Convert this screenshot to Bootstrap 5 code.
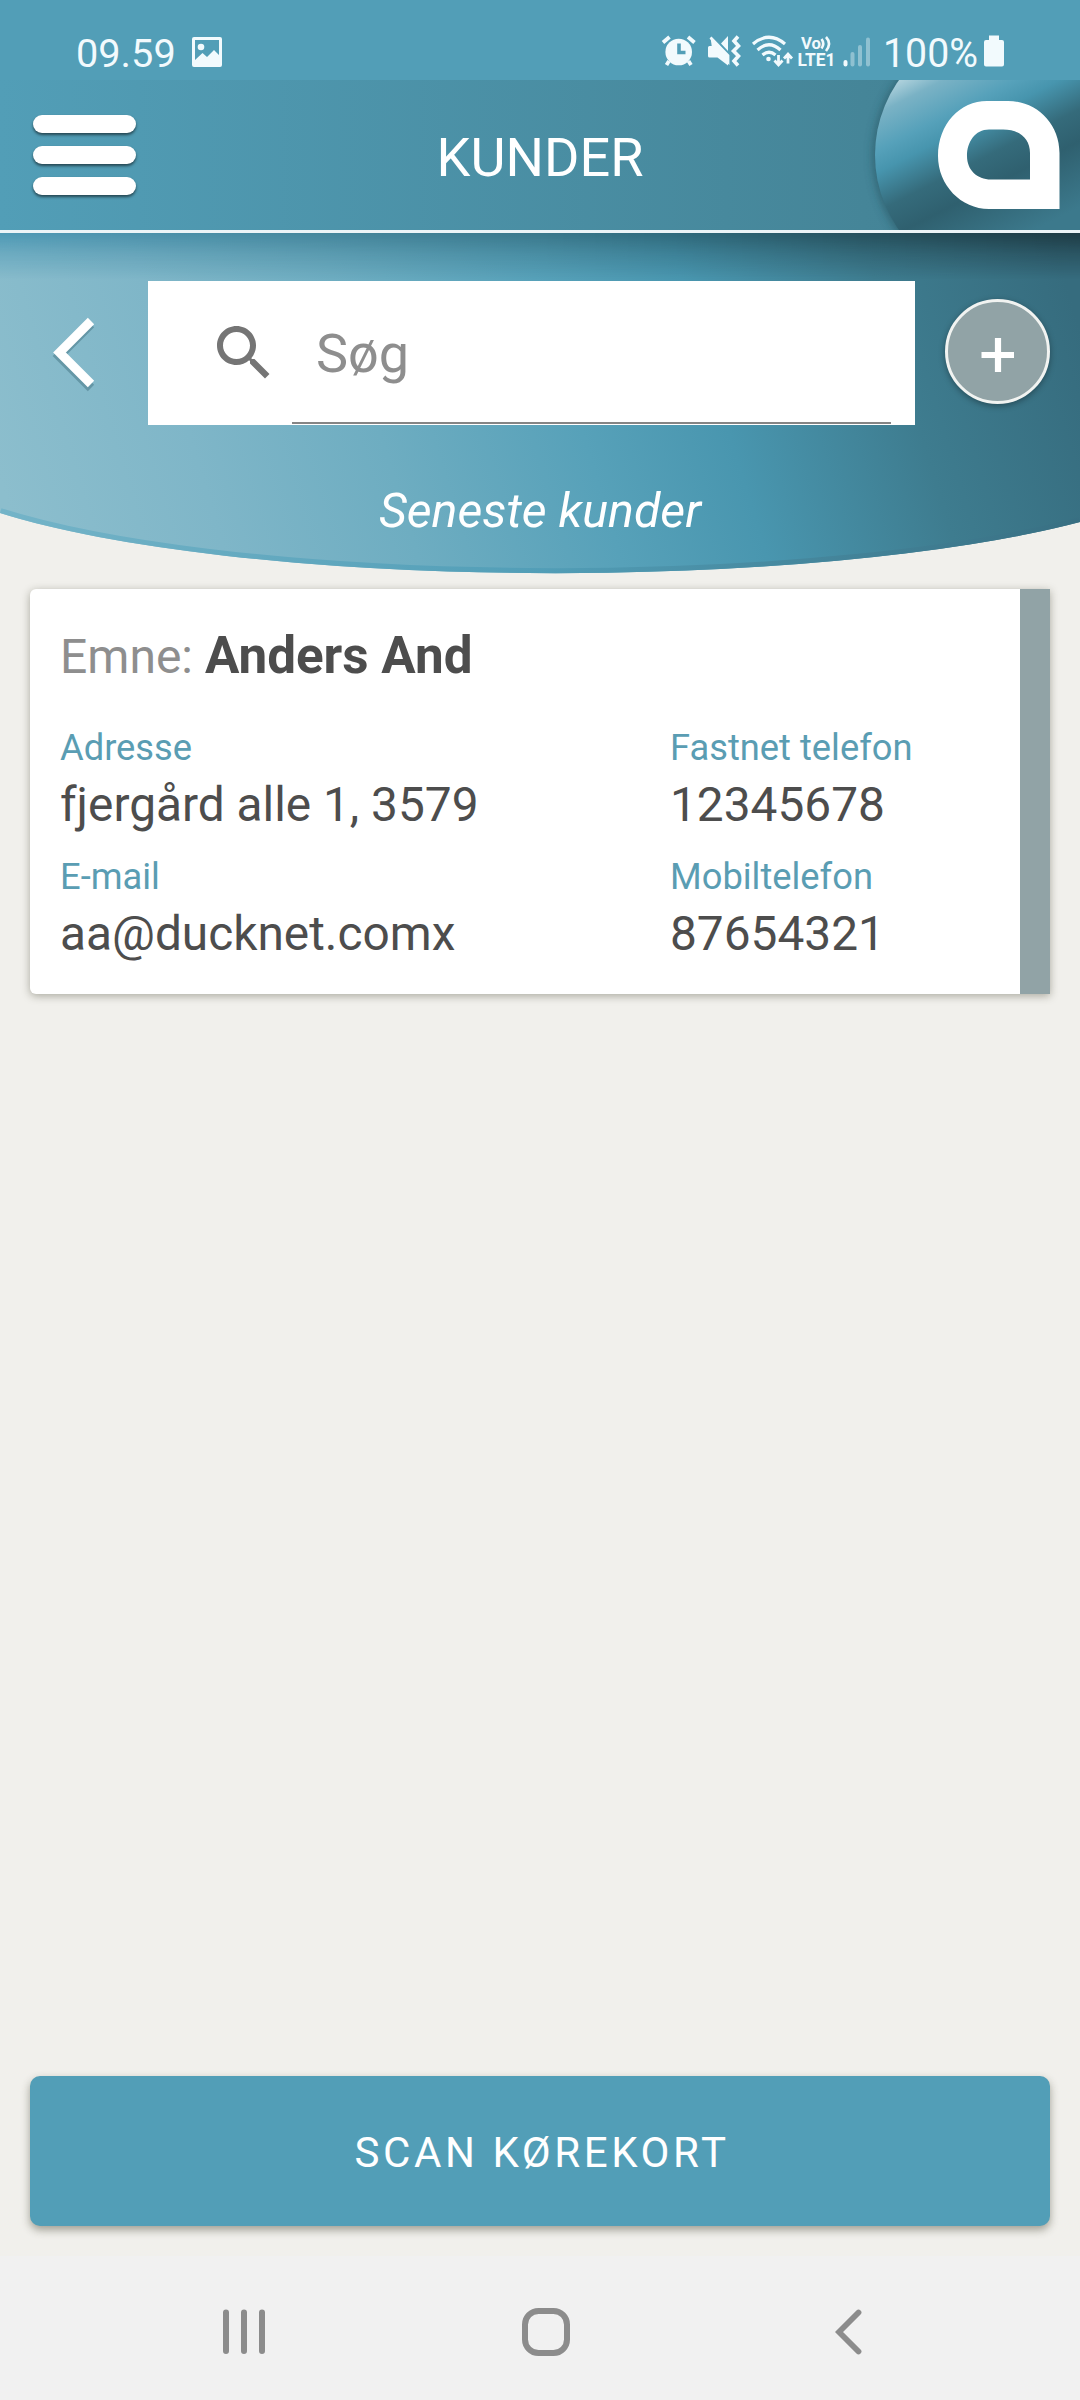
<!DOCTYPE html>
<html lang="da">
<head>
<meta charset="utf-8">
<meta name="viewport" content="width=device-width, initial-scale=1">
<title>Kunder</title>
<link href="https://cdn.jsdelivr.net/npm/bootstrap@5.3.0/dist/css/bootstrap.min.css" rel="stylesheet">
<style>
body{font-family:Roboto,"Liberation Sans",sans-serif;background:#f1f0ec;color:#4d4d4d}
.phone{width:1080px;height:2400px;overflow:hidden}
svg{display:block;flex:none}
.statusbar{height:80px;background:#529eb7;color:#f2fafd;font-size:39.7px;line-height:40px;padding:33px 74px 0 76px}
.clock{margin-top:1px}
.pic-icon{margin:4px 0 0 16px}
.appbar{height:153px;border-bottom:3px solid #ecf4f7;background:linear-gradient(90deg,#529eb7,#458598 80%,#417f91)}
.menu-btn{width:103px;gap:13px;margin:-1px 0 0 33px}
.menu-btn span{height:18px;border-radius:9px;background:#fff;box-shadow:0 2px 3px rgba(0,0,0,.55)}
.app-title{font-size:54px;line-height:60px;color:#fff;padding-top:5px}
.hero{height:343px}
.hero-art{position:absolute;left:0;top:0}
.search-row{padding:48px 30px 0 0;height:249px}
.back-btn{width:148px;height:144px}
.search-box{width:767px;height:144px;background:#fff;padding:0 24px 0 60px}
.search-field{width:599px;border:0;border-bottom:2px solid #858585;padding:3px 0 0 24px;height:143px;outline:0;font-size:54px;color:#4d4d4d;background:transparent}
.search-field::placeholder{color:#8e8e8e;opacity:1}
.add-btn{width:105px;height:105px;margin-top:18px;border:3px solid #f1f3f1;background:#91a3a6;box-shadow:0 2px 6px rgba(0,0,0,.35)}
.hero-label{font-size:48.3px;line-height:58px;color:#fff}
.customer{margin:13px 30px 0;height:405px;border-radius:6px 0 0 6px;border-right:30px solid #91a3a6;background:#fff;box-shadow:0 2px 9px rgba(60,60,40,.4);padding:38px 30px 0}
.subject{font-size:48px;line-height:60px;color:#8e8e8e;margin-bottom:35px}
.subject b{font-size:51.2px;line-height:50px;color:#4d4d4d}
.cap{font-size:36.3px;line-height:52px;color:#5a9db3}
.val{font-size:47.8px;line-height:62px;margin-bottom:15px}
.left-col{width:610px}
.scan{height:150px;border-radius:10px;background:#529eb7;color:#fff;font-size:42px;letter-spacing:3.6px;margin:0 30px 30px;padding:2px 0 0 4px;box-shadow:0 4px 8px rgba(60,60,40,.45)}
.navkeys{height:144px;background:#f1f1f1;padding:8px 0 0 12px}
.navkeys div{width:302px}
</style>
</head>
<body>
<div class="phone d-flex flex-column">
  <div class="statusbar d-flex">
    <span class="clock">09.59</span>
    <svg class="pic-icon" width="30" height="30" viewBox="0 0 30 30"><path fill="#f2fafd" fill-rule="evenodd" d="M2 0H28Q30 0 30 2V28Q30 30 28 30H2Q0 30 0 28V2Q0 0 2 0ZM3 3V23L10.500 16L15 20L22 13L27 18V3Z"/><circle cx="9" cy="10" r="3.300" fill="#f2fafd"/></svg>
    <svg class="ms-auto" width="346" height="46" viewBox="660 33 346 46" fill="#f2fafd" stroke="none">
      <circle cx="678.700" cy="52" r="13.300"/>
      <path d="M663 42.500L669.500 37M688 37L694.500 42.500M669 61L666.500 65M688.500 61L691 65" stroke="#f2fafd" stroke-width="3.800" fill="none"/>
      <path d="M679 43.500V52.500H685.500" stroke="#529eb7" stroke-width="3.600" fill="none"/>
      <path d="M709.500 46H712.500L728 60V65.500L717.500 57.500H709.500Q708 57.500 708 56V47.500Q708 46 709.500 46ZM728 36V51L721 43.500Z"/>
      <path d="M710.500 37.500L728 55.500V62L712 48" stroke="#f2fafd" stroke-width="2.800"/>
      <path d="M738 36.500L734 41L738.500 46L733.500 51L738.500 56L734 61L738 65.500" stroke="#f2fafd" stroke-width="3.600" fill="none"/>
      <g fill="none" stroke="#f2fafd" stroke-width="3.200"><path d="M753 44Q769 30.500 785 44"/><path d="M757.500 50Q769 39.500 780.500 50"/><path d="M762.500 55Q769 49.500 775.500 55"/><path d="M778.500 55V64M774.500 60.500L778.500 65L782.500 60.500M788 63.500V54M784 58.500L788 54L792 58.500" stroke-width="2.800"/></g>
      <circle cx="768.500" cy="59" r="2.300"/>
      <text x="801" y="49" font-size="17" font-weight="700" textLength="20" lengthAdjust="spacingAndGlyphs">Vo</text>
      <path d="M821.500 39Q825 43.500 821.500 48.500M826 37Q832 43.500 826 51" stroke="#f2fafd" stroke-width="2.600" fill="none"/>
      <text x="797.500" y="66" font-size="18" font-weight="700" textLength="38" lengthAdjust="spacingAndGlyphs">LTE1</text>
      <rect x="843.500" y="60" width="4" height="6.500" rx="2"/>
      <g opacity=".38"><rect x="850.500" y="52" width="4" height="14.500" rx="2"/><rect x="858" y="45" width="4" height="21.500" rx="2"/><rect x="866" y="37.500" width="4" height="29" rx="2"/></g>
      <text x="883" y="67" font-size="40" textLength="95" lengthAdjust="spacingAndGlyphs">100%</text>
      <path d="M989 35.500H999V40H1002Q1004 40 1004 42V64.500Q1004 66.500 1002 66.500H986Q984 66.500 984 64.500V42Q984 40 986 40H989Z"/>
    </svg>
  </div>
  <header class="appbar position-relative d-flex align-items-center">
    <div class="menu-btn d-flex flex-column"><span></span><span></span><span></span></div>
    <div class="app-title position-absolute w-100 text-center">KUNDER</div>
    <svg class="ms-auto" width="220" height="150" viewBox="860 80 220 150">
      <defs>
        <linearGradient id="ball" gradientUnits="userSpaceOnUse" x1="905" y1="75" x2="1004" y2="270"><stop offset="0" stop-color="#b5d5df"/><stop offset=".1" stop-color="#7ab2c5"/><stop offset=".25" stop-color="#56a1ba"/><stop offset=".34" stop-color="#4795ae"/><stop offset=".5" stop-color="#356b7b"/><stop offset=".63" stop-color="#2f606f"/><stop offset=".9" stop-color="#3c798c"/></linearGradient>
        <filter id="soft" x="-20%" y="-20%" width="140%" height="140%"><feGaussianBlur stdDeviation="5"/></filter>
      </defs>
      <circle cx="1002" cy="156" r="129" fill="#1f4450" opacity=".5" filter="url(#soft)"/>
      <circle cx="1004" cy="155" r="129" fill="url(#ball)"/>
      <path fill="#fff" fill-rule="evenodd" d="M987 101H1008C1036 101 1059.500 123 1059.500 153V209H989C961 209 938 185 938 156C938 124 960 101 987 101ZM989 129.500C975 129.500 967 142 967 156C967 170 977 179.500 991 179.500H1030V153C1030 139 1020 129.500 1003 129.500Z"/>
    </svg>
  </header>
  <section class="hero position-relative">
    <svg class="hero-art" width="1080" height="343" viewBox="0 233 1080 343">
      <defs>
        <linearGradient id="sea" gradientUnits="userSpaceOnUse" x1="0" y1="480" x2="1030" y2="165"><stop offset="0" stop-color="#8cbecd"/><stop offset=".18" stop-color="#7fb6c8"/><stop offset=".35" stop-color="#6eadc1"/><stop offset=".53" stop-color="#57a1b9"/><stop offset=".66" stop-color="#4996af"/><stop offset=".83" stop-color="#3e7c8f"/><stop offset="1" stop-color="#366c7e"/></linearGradient>
        <linearGradient id="shade"><stop offset="0" stop-color="#006b96" stop-opacity=".42"/><stop offset=".5" stop-color="#14404d" stop-opacity=".42"/><stop offset="1" stop-color="#0a1416" stop-opacity=".55"/></linearGradient>
        <linearGradient id="fall" x2="0" y2="1"><stop offset="0" stop-color="#fff"/><stop offset=".45" stop-color="#777"/><stop offset="1" stop-color="#000"/></linearGradient>
        <mask id="fade"><rect y="233" width="1080" height="46" fill="url(#fall)"/></mask>
        <clipPath id="bowl"><path d="M0 233H1080V522A650 125 0 0 1 0 513Z"/></clipPath>
        <linearGradient id="rim"><stop offset="0" stop-color="#74b4c8"/><stop offset=".5" stop-color="#529eb7"/><stop offset="1" stop-color="#386f82"/></linearGradient>
      </defs>
      <g clip-path="url(#bowl)">
        <rect y="233" width="1080" height="343" fill="url(#sea)"/>
        <rect y="233" width="1080" height="46" fill="url(#shade)" mask="url(#fade)"/>
        <path d="M1080 522A650 125 0 0 1 0 513" fill="none" stroke="url(#rim)" stroke-width="10"/>
      </g>
    </svg>
    <div class="search-row d-flex position-relative">
      <div class="back-btn d-flex align-items-center justify-content-center">
        <svg width="60" height="90" viewBox="44 308 60 90"><path d="M91 321L59 353L91 385" fill="none" stroke="#1c4552" stroke-opacity=".3" stroke-width="9" transform="translate(0 3)"/><path d="M91 321L59.500 352.500L91 384" fill="none" stroke="#fff" stroke-width="9"/></svg>
      </div>
      <div class="search-box d-flex">
        <svg class="align-self-center" width="72" height="72" viewBox="0 0 24 24" fill="#757575"><path d="M15.500 14h-.79l-.28-.27C15.410 12.590 16 11.110 16 9.500 16 5.910 13.090 3 9.500 3S3 5.910 3 9.500 5.910 16 9.500 16c1.610 0 3.090-.59 4.230-1.570l.27.28v.79l5 4.990L20.490 19l-4.990-5zm-6 0C7.010 14 5 11.990 5 9.500S7.010 5 9.500 5 14 7.010 14 9.500 11.990 14 9.500 14z"/></svg>
        <input class="search-field ms-auto" type="text" placeholder="Søg">
      </div>
      <button class="add-btn rounded-circle ms-auto p-0 d-flex align-items-center justify-content-center">
        <svg width="40" height="40" viewBox="0 0 40 40"><path d="M20 6V41M3.500 23H36" stroke="#fff" stroke-width="6.200"/></svg>
      </button>
    </div>
    <div class="hero-label text-center fst-italic position-relative">Seneste kunder</div>
  </section>
  <article class="customer">
    <div class="subject">Emne: <b>Anders And</b></div>
    <div class="d-flex">
      <div class="left-col"><div class="cap">Adresse</div><div class="val">fjergård alle 1, 3579</div><div class="cap">E-mail</div><div class="val">aa@ducknet.comx</div></div>
      <div><div class="cap">Fastnet telefon</div><div class="val">12345678</div><div class="cap">Mobiltelefon</div><div class="val">87654321</div></div>
    </div>
  </article>
  <button class="scan border-0 mt-auto">SCAN KØREKORT</button>
  <nav class="navkeys d-flex justify-content-center align-items-center">
    <div class="d-flex justify-content-center"><svg width="42" height="46" viewBox="0 0 42 46"><path d="M3 3.500V42M21 3.500V42M39 3.500V42" stroke="#8c8c8c" stroke-width="6" stroke-linecap="round"/></svg></div>
    <div class="d-flex justify-content-center"><svg width="48" height="48" viewBox="0 0 48 48"><rect x="3" y="3" width="42" height="42" rx="13.500" fill="none" stroke="#8c8c8c" stroke-width="6"/></svg></div>
    <div class="d-flex justify-content-center"><svg width="27" height="46" viewBox="0 0 27 46"><path d="M23.500 3.500L4 23L23.500 42.500" fill="none" stroke="#8c8c8c" stroke-width="5.800" stroke-linecap="round"/></svg></div>
  </nav>
</div>
<script src="https://cdn.jsdelivr.net/npm/bootstrap@5.3.0/dist/js/bootstrap.bundle.min.js"></script>
</body>
</html>
